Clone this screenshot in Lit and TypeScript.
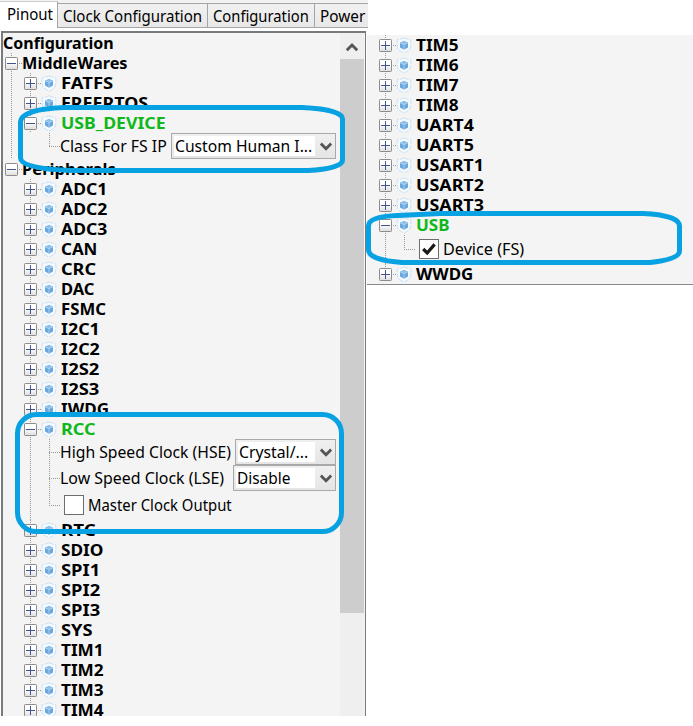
import { LitElement, html, svg, css, nothing } from "lit";
import { customElement, property } from "lit/decorators.js";

/** A single-line label condensed or widened to a given advance width. */
@customElement("fit-label")
class FitLabel extends LitElement {
  @property({ type: Number }) width = 0;
  @property() text = "";
  static styles = css`
    :host { display: block; flex: none; white-space: pre; }
    .inner { display: inline-block; transform-origin: 0 50%; }
  `;
  render() {
    return html`<span class="inner">${this.text}</span>`;
  }
  updated() {
    const el = this.renderRoot.querySelector<HTMLElement>(".inner")!;
    this.style.width = `${this.width}px`;
    el.style.transform = `scaleX(${this.width / el.offsetWidth})`;
  }
}

type Row =
  | { kind: "node"; label: string; w: number; open?: boolean; on?: boolean }
  | { kind: "select"; label: string; w: number; value: string; vw: number; box: number; last?: boolean; end?: boolean }
  | { kind: "check"; label: string; w: number; checked?: boolean };

const node = (label: string, w: number): Row => ({ kind: "node", label, w });

const middlewares: Row[] = [
  node("FATFS", 52),
  node("FREERTOS", 87),
  { kind: "node", label: "USB_DEVICE", w: 105, open: true, on: true },
  { kind: "select", label: "Class For FS IP", w: 107, value: "Custom Human I...", vw: 137, box: 165, last: true, end: true },
];

const peripherals: Row[] = [
  node("ADC1", 46), node("ADC2", 46), node("ADC3", 46), node("CAN", 36),
  node("CRC", 35), node("DAC", 33), node("FSMC", 45), node("I2C1", 39),
  node("I2C2", 39), node("I2S2", 38), node("I2S3", 38), node("IWDG", 48),
  { kind: "node", label: "RCC", w: 35, open: true, on: true },
  { kind: "select", label: "High Speed Clock (HSE)", w: 171, value: "Crystal/...", vw: 69, box: 101 },
  { kind: "select", label: "Low Speed Clock (LSE)", w: 164, value: "Disable", vw: 53, box: 103 },
  { kind: "check", label: "Master Clock Output", w: 144 },
  node("RTC", 35), node("SDIO", 42), node("SPI1", 39), node("SPI2", 39),
  node("SPI3", 39), node("SYS", 32), node("TIM1", 43), node("TIM2", 43),
  node("TIM3", 43), node("TIM4", 43),
];

const more: Row[] = [
  node("TIM5", 43), node("TIM6", 43), node("TIM7", 43), node("TIM8", 43),
  node("UART4", 58), node("UART5", 58), node("USART1", 68), node("USART2", 68),
  node("USART3", 68),
  { kind: "node", label: "USB", w: 34, open: true, on: true },
  { kind: "check", label: "Device (FS)", w: 81, checked: true },
  node("WWDG", 57),
];

const expander = (open: boolean) => html`
  <svg class="exp" width="13" height="13" viewBox="0 0 13 13">
    <defs><linearGradient id="g" x1="0" y1="0" x2="0" y2="1">
      <stop offset="0.4" stop-color="#fff" /><stop offset="1" stop-color="#dcdcdc" />
    </linearGradient></defs>
    <rect x="0.5" y="0.5" width="12" height="12" rx="0.8" fill="url(#g)" stroke="#8c8c8c" />
    <path d="M2 6.5H11" stroke="#40558f" />
    ${open ? nothing : svg`<path d="M6.5 2V11" stroke="#40558f" />`}
  </svg>`;

const cube = html`
  <svg class="cube" width="16" height="17" viewBox="0 0 16 17">
    <path d="M8 0.8Q11 2.4 14.6 2.5Q15.6 10 13.4 13L8 16.2L2.6 13Q0.4 10 1.4 2.5Q5 2.4 8 0.8Z"
      fill="#f5faff" stroke="#c3def2" stroke-width="0.9" stroke-dasharray="5 1.2" />
    <path d="M8 4L12 5.8V10.6L8 12.8L4 10.6V5.8Z" fill="#69a7dc" />
    <path d="M8 4L12 5.8L8 7.5L4 5.8Z" fill="#8cc0ea" />
    <path d="M4.3 6L8 7.6L11.7 6M8 7.6V12.4" fill="none" stroke="#c3e0f6" stroke-width="0.7" />
  </svg>`;

const chevron = (up: boolean) => html`
  <svg width="12" height="9" viewBox="0 0 12 9">
    <path d=${up ? "M0.8 7.2L6 2L11.2 7.2" : "M0.8 1.6L6 6.8L11.2 1.6"} fill="none" stroke="#555" stroke-width="2.8" />
  </svg>`;

@customElement("pin-tree")
class PinTree extends LitElement {
  @property({ attribute: false }) rows: Row[] = [];
  static styles = css`
    :host { display: block; color: #000; font: 16px/20px "Noto Sans", sans-serif; }
    svg { display: block; flex: none; }
    .row { display: flex; align-items: center; height: 20px; }
    .stem { flex: none; align-self: stretch; width: 13px; display: flex; align-items: center;
      background: repeating-linear-gradient(#999 0 1px, transparent 1px 2px) 6px 0 / 1px 100% no-repeat; }
    .stem.none { background: none; }
    .row.node:last-child .stem.short { background-size: 1px 50%; }
    .dash { flex: none; width: 4px; height: 1px;
      background: repeating-linear-gradient(90deg, transparent 0 1px, #999 1px 2px); }
    .cube { margin-right: 4px; }
    .bold { font-weight: 700; }
    .on { color: #10b81c; }
    .field { height: 26px; }
    .check { height: 29px; }
    .branch { flex: none; align-self: stretch; width: 11px; margin-left: 12px;
      background:
        repeating-linear-gradient(#999 0 1px, transparent 1px 2px) 0 0 / 1px 100% no-repeat,
        repeating-linear-gradient(90deg, #999 0 1px, transparent 1px 2px) 0 50% / 11px 1px no-repeat; }
    .branch.end { background-size: 1px 50%, 11px 1px; }
    .select { box-sizing: border-box; height: 26px; margin: 0 4px 0 auto; display: flex; align-items: center;
      justify-content: space-between; border: 1px solid #a9a9a9; padding: 0 3px 0 2px;
      background: linear-gradient(#f0f0f0, #e5e5e5); }
    .value { flex: 1; height: 20px; background: #fff; padding-left: 1px; margin-right: 5px; overflow: hidden; }
    .box { flex: none; box-sizing: border-box; width: 20px; height: 20px; margin: 0 4px; border: 1px solid #6d6d6d;
      background: #fff; display: flex; align-items: center; justify-content: center; }
    .check { box-sizing: border-box; padding-bottom: 1px; }
    .check .stem { margin-bottom: -1px; }
  `;
  row(r: Row) {
    if (r.kind === "node")
      return html`<div class="row node">
        <div class="stem short">${expander(!!r.open)}</div><div class="dash"></div>${cube}
        <fit-label class="bold ${r.on ? "on" : ""}" .text=${r.label} .width=${r.w}></fit-label>
      </div>`;
    if (r.kind === "select")
      return html`<div class="row field">
        <div class="stem ${r.end ? "none" : ""}"></div><div class="branch ${r.last ? "end" : ""}"></div>
        <fit-label .text=${r.label} .width=${r.w}></fit-label>
        <div class="select" style="width:${r.box}px">
          <div class="value"><fit-label .text=${r.value} .width=${r.vw}></fit-label></div>${chevron(false)}
        </div>
      </div>`;
    return html`<div class="row check">
      <div class="stem"></div><div class="branch end"></div>
      <div class="box">${r.checked
        ? html`<svg width="16" height="16" viewBox="0 0 16 16"><path d="M2.2 8L6.2 12L13.6 3.4" fill="none" stroke="#1a1a1a" stroke-width="3.2" /></svg>`
        : nothing}</div>
      <fit-label .text=${r.label} .width=${r.w}></fit-label>
    </div>`;
  }
  render() {
    return this.rows.map((r) => this.row(r));
  }
}

@customElement("app-root")
class AppRoot extends LitElement {
  static styles = css`
    :host { display: flex; align-items: flex-start; position: relative; width: 693px; height: 726px; overflow: hidden;
      background: #fff; color: #000; font: 16px/20px "Noto Sans", sans-serif; }
    svg { display: block; flex: none; }
    .left { width: 368px; height: 716px; display: flex; flex-direction: column; overflow: hidden; flex: none; }
    .tabs { height: 31px; flex: none; display: flex; align-items: flex-start; overflow: hidden;
      background: linear-gradient(#f2f2f2 0 28px, #fff 28px); }
    .tab { box-sizing: border-box; flex: none; height: 25px; margin-top: 3px; border: 1px solid #a5a5a5;
      border-left-width: 0; background: linear-gradient(#f1f1f1, #e8e8e8); padding: 2px 0 0 5px; width: 150px; }
    .tab.active { width: 58px; height: 27px; margin-top: 1px; padding: 2px 0 0 7px; background: #fff;
      border-bottom: 0; border-top-color: #ccc; }
    .tab.mid { width: 107px; }
    .tab.last { width: 60px; }
    .panel { box-sizing: border-box; flex: 1; min-height: 0; width: 365px; margin-left: 1px; display: flex; overflow: hidden;
      border: solid #777b80; border-width: 2px 1px 0 2px; background: #f4f4f4; }
    .tree { flex: 1; min-width: 0; overflow: hidden; }
    .bold { font-weight: 700; }
    .title { height: 20px; }
    .group { display: flex; align-items: center; height: 20px; padding-left: 2px; }
    .group.first { background: repeating-linear-gradient(#999 0 1px, transparent 1px 2px) 8px 0 / 1px 100% no-repeat; }
    .tick { flex: none; width: 4px; height: 1px; background: repeating-linear-gradient(90deg, transparent 0 1px, #999 1px 2px); }
    .branches { padding-left: 21px; }
    .rail { background: repeating-linear-gradient(#999 0 1px, transparent 1px 2px) 8px 0 / 1px 100% no-repeat; }
    .scroll { flex: none; width: 24px; margin-right: 1px; background: #efefef; display: flex; flex-direction: column; }
    .up { box-sizing: border-box; height: 26px; flex: none; display: flex; align-items: center; justify-content: center;
      padding-top: 3px; }
    .thumb { height: 554px; background: #cdcdcd; }
    .right { box-sizing: border-box; flex: 1; margin-top: 35px; height: 250px; padding-left: 12px; margin-left: -1px;
      background: #f4f4f4; border-bottom: 1px solid #8a8a8a; }
    .right pin-tree { margin-right: 0; }
    .marks { position: absolute; left: 0; top: 0; }
  `;
  render() {
    return html`
      <div class="left">
        <div class="tabs">
          <div class="tab active"><fit-label text="Pinout" .width=${46}></fit-label></div>
          <div class="tab"><fit-label text="Clock Configuration" .width=${139}></fit-label></div>
          <div class="tab mid"><fit-label text="Configuration" .width=${96}></fit-label></div>
          <div class="tab last"><fit-label text="Power" .width=${45}></fit-label></div>
        </div>
        <div class="panel">
          <div class="tree">
            <fit-label class="bold title" text="Configuration" .width=${111}></fit-label>
            <div class="group first">${expander(true)}<div class="tick"></div><fit-label class="bold" text="MiddleWares" .width=${106}></fit-label></div>
            <div class="branches rail"><pin-tree .rows=${middlewares}></pin-tree></div>
            <div class="group">${expander(true)}<div class="tick"></div><fit-label class="bold" text="Peripherals" .width=${94}></fit-label></div>
            <div class="branches"><pin-tree .rows=${peripherals}></pin-tree></div>
          </div>
          <div class="scroll"><div class="up">${chevron(true)}</div><div class="thumb"></div></div>
        </div>
      </div>
      <div class="right"><pin-tree .rows=${more}></pin-tree></div>
      <svg class="marks" width="693" height="726" viewBox="0 0 693 726" fill="none" stroke="#08a1e2" stroke-width="5">
        <path d="M64 107.500H302C325 108.500 342.500 112 342.500 119V160C342.500 166 328 169.500 308 170.500H72C42 169.500 20.500 166 20.500 158V122C20.500 113 38 108.500 64 107.500Z" />
        <rect x="17.5" y="414.5" width="324" height="117" rx="19" />
        <path d="M398 215.500C380 216 368.500 219 368.500 226V250C368.500 257 382 261 402 262.500H650C668 260.500 679.500 257 679.500 251V226C679.500 219 666 214.500 643 213.500H440Z" />
      </svg>`;
  }
}
